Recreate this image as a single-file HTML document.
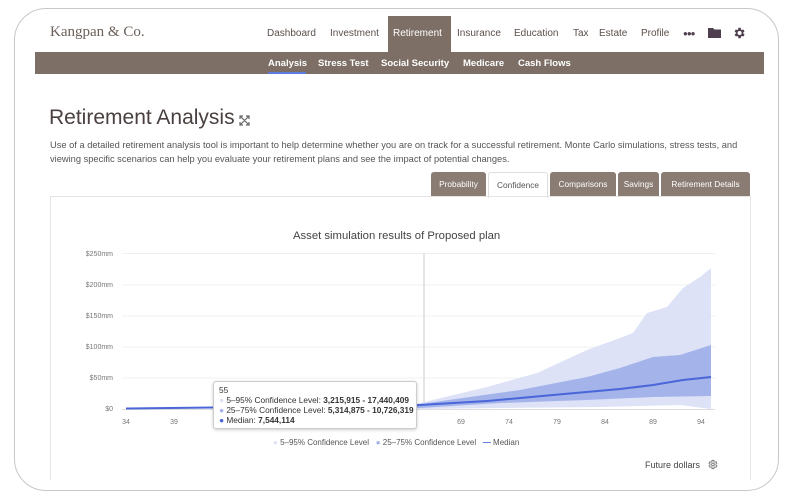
<!DOCTYPE html>
<html><head><meta charset="utf-8"><style>
*{margin:0;padding:0;box-sizing:border-box}
body{width:793px;height:497px;background:#fff;font-family:"Liberation Sans",sans-serif;position:relative;overflow:hidden;color:#444}
.frame{position:absolute;left:14px;top:8px;width:765px;height:483px;border:1px solid #c8c8c8;border-radius:32px;background:#fff}
.abs{position:absolute;white-space:nowrap}
.nav{font-size:10px;color:#5a4f4a;top:28px}
.sub{position:absolute;left:35px;top:52px;width:729px;height:22px;background:#7d6f66}
.sub span{position:absolute;top:6px;font-size:9.5px;font-weight:bold;color:#fff}
.tab{position:absolute;top:172px;height:25px;background:#8a7c73;color:#fff;font-size:8.3px;text-align:center;line-height:25px;border-radius:3px 3px 0 0}
.leg{font-size:8px;color:#555}
</style></head><body>
<div class="frame"></div>
<div class="abs" style="left:50px;top:24px;font-family:'Liberation Serif',serif;font-size:15px;color:#6b605a">Kangpan &amp; Co.</div>
<div class="abs nav" style="left:267px">Dashboard</div>
<div class="abs nav" style="left:330px">Investment</div>
<div class="abs" style="left:388px;top:16px;width:63px;height:36px;background:#7d6f66"></div>
<div class="abs nav" style="left:393px;color:#fff">Retirement</div>
<div class="abs nav" style="left:457px">Insurance</div>
<div class="abs nav" style="left:514px">Education</div>
<div class="abs nav" style="left:573px">Tax</div>
<div class="abs nav" style="left:599px">Estate</div>
<div class="abs nav" style="left:641px">Profile</div>
<div class="abs" style="left:683px;top:29px;font-size:8px;font-weight:bold;color:#4e3e4e;letter-spacing:-1px">●●●</div>
<svg class="abs" style="left:708px;top:27px" width="13" height="11"><path d="M0 1h5l1.5 1.5H13V11H0z" fill="#4e3e4e"/></svg>
<svg class="abs" style="left:732px;top:26px" width="14" height="14" viewBox="0 0 24 24"><path fill="#4e3e4e" d="M19.4 13a7.5 7.5 0 000-2l2.1-1.6-2-3.5-2.5 1a7 7 0 00-1.7-1L15 3h-4l-.4 2.9a7 7 0 00-1.7 1l-2.5-1-2 3.5L6.6 11a7.5 7.5 0 000 2l-2.1 1.6 2 3.5 2.5-1a7 7 0 001.7 1L11 21h4l.4-2.9a7 7 0 001.7-1l2.5 1 2-3.5zM13 15.5a3.5 3.5 0 110-7 3.5 3.5 0 010 7z"/></svg>
<div class="sub">
<span style="left:233px">Analysis</span>
<div style="position:absolute;left:233px;top:20px;width:38px;height:2px;background:#5b7bdf"></div>
<span style="left:283px">Stress Test</span>
<span style="left:346px">Social Security</span>
<span style="left:428px">Medicare</span>
<span style="left:483px">Cash Flows</span>
</div>
<div class="abs" style="left:49px;top:106px;font-size:21px;color:#4a4040">Retirement Analysis</div>
<svg class="abs" style="left:239px;top:115px" width="11" height="11" viewBox="0 0 11 11" stroke="#666" fill="none" stroke-width="1.2"><path d="M1 4V1h3M7 1h3v3M10 7v3H7M4 10H1V7M1 1l9 9M10 1l-9 9"/></svg>
<div class="abs" style="left:50px;top:138px;font-size:9.3px;line-height:14px;color:#555;white-space:normal;width:720px">Use of a detailed retirement analysis tool is important to help determine whether you are on track for a successful retirement. Monte Carlo simulations, stress tests, and viewing specific scenarios can help you evaluate your retirement plans and see the impact of potential changes.</div>
<div class="tab" style="left:431px;width:55px">Probability</div>
<div class="tab" style="left:488px;width:60px;background:#fff;color:#555;border:1px solid #ddd;border-bottom:none;height:26px">Confidence</div>
<div class="tab" style="left:550px;width:66px">Comparisons</div>
<div class="tab" style="left:618px;width:41px">Savings</div>
<div class="tab" style="left:661px;width:89px">Retirement Details</div>
<div class="abs" style="left:50px;top:196px;width:701px;height:284px;border:1px solid #e4e4e4;border-bottom:none"></div>
<div class="abs" style="left:293px;top:230px;font-size:11.3px;color:#444">Asset simulation results of Proposed plan</div>
<svg class="abs" style="left:0;top:0" width="793" height="497">
<g stroke="#f0f0f0" stroke-width="1"><path d="M122 253.5H715M122 285H715M122 316H715M122 347H715M122 378H715"/></g>
<path d="M122 409.5H715" stroke="#ddd"/>
<path d="M424 253V409" stroke="#ccc"/>
<g font-size="7" fill="#777" text-anchor="end" font-family="Liberation Sans"><text x="113" y="256">$250mm</text><text x="113" y="287">$200mm</text><text x="113" y="318">$150mm</text><text x="113" y="349">$100mm</text><text x="113" y="380">$50mm</text><text x="113" y="411">$0</text></g>
<g font-size="7" fill="#777" text-anchor="middle" font-family="Liberation Sans"><text x="126" y="424">34</text><text x="174" y="424">39</text><text x="461" y="424">69</text><text x="509" y="424">74</text><text x="557" y="424">79</text><text x="605" y="424">84</text><text x="653" y="424">89</text><text x="701" y="424">94</text><text x="414" y="424">4</text></g>
<path d="M330 408L380 407L420 403L487 387L537 373L587 350L620 338L633 333L647 313L667 307L683 288L700 277L711 268L711 409L680 405L600 407L500 408L420 409L330 409Z" fill="#dde2f7"/>
<path d="M330 408L420 404L520 390L587 377L620 368L653 357L680 355L711 345L711 396L653 397L587 400L500 403L420 408L330 409Z" fill="#a4b3ea"/>
<path d="M126 408.5L420 405L487 401L553 395L620 389L653 385L683 380L711 377" stroke="#4a66d8" stroke-width="2" fill="none"/>
</svg>
<div class="abs" style="left:213px;top:381px;width:204px;height:48px;background:#fff;border:1px solid #ccc;border-radius:3px;box-shadow:0 1px 3px rgba(0,0,0,.2);font-size:8.3px;color:#333;padding:3px 5px;line-height:10px">
55<br><span style="color:#dde2f7">●</span> 5–95% Confidence Level: <b>3,215,915 - 17,440,409</b><br><span style="color:#a4b3ea">●</span> 25–75% Confidence Level: <b>5,314,875 - 10,726,319</b><br><span style="color:#4a66d8">●</span> Median: <b>7,544,114</b></div>
<div class="abs leg" style="left:273px;top:438px"><span style="color:#dde2f7">●</span> 5–95% Confidence Level &nbsp; <span style="color:#a4b3ea">●</span> 25–75% Confidence Level &nbsp; <span style="color:#4a66d8;font-weight:bold">—</span> Median</div>
<div class="abs" style="left:645px;top:460px;font-size:9px;color:#444">Future dollars</div>
<svg class="abs" style="left:707px;top:459px" width="11" height="11" viewBox="0 0 24 24"><path fill="none" stroke="#777" stroke-width="2" d="M19.4 13a7.5 7.5 0 000-2l2.1-1.6-2-3.5-2.5 1a7 7 0 00-1.7-1L15 3h-4l-.4 2.9a7 7 0 00-1.7 1l-2.5-1-2 3.5L6.6 11a7.5 7.5 0 000 2l-2.1 1.6 2 3.5 2.5-1a7 7 0 001.7 1L11 21h4l.4-2.9a7 7 0 001.7-1l2.5 1 2-3.5z"/><circle cx="13" cy="12" r="3" fill="none" stroke="#777" stroke-width="2"/></svg>
</body></html>
